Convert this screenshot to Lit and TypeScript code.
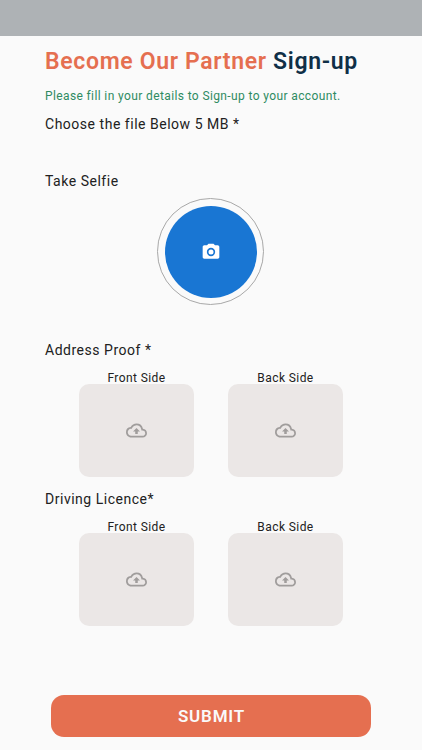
import { LitElement, html, css } from "lit";
import { customElement } from "lit/decorators.js";

const cloud = html`<svg class="cloud" viewBox="0 0 24 24" fill="#a09d9c"><path d="M19.35 10.04A7.49 7.49 0 0 0 12 4C9.11 4 6.6 5.64 5.35 8.04A5.994 5.994 0 0 0 0 14c0 3.31 2.69 6 6 6h13c2.76 0 5-2.24 5-5 0-2.64-2.05-4.78-4.65-4.96zM19 18H6c-2.21 0-4-1.79-4-4 0-2.05 1.53-3.76 3.56-3.97l1.07-.11.5-.95A5.469 5.469 0 0 1 12 6c2.62 0 4.88 1.86 5.39 4.43l.3 1.5 1.53.11A2.98 2.98 0 0 1 22 15c0 1.65-1.35 3-3 3zM8 13h2.55v3h2.9v-3H16l-4-4z"/></svg>`;

@customElement("app-root")
export class AppRoot extends LitElement {
  static styles = css`
    :host { display: block; position: relative; width: 422px; height: 750px; background: #fafafa; font-family: Roboto, "Liberation Sans", sans-serif; color: #212121; overflow: hidden; }
    .status { height: 36px; background: #aeb2b5; }
    .content { padding: 11px 45px 0; display: flex; flex-direction: column; }
    h1 { margin: 0; font-size: 23px; line-height: 30px; font-weight: 600; letter-spacing: 0.66px; color: #e56f50; white-space: nowrap; }
    h1 span { color: #0f2f47; }
    .sub { margin: 12px 0 0; font-size: 12px; line-height: 15px; letter-spacing: 0.38px; color: #2e8b62; white-space: nowrap; }
    .label { font-size: 14px; line-height: 18px; letter-spacing: 0.52px; color: #212121; white-space: nowrap; }
    .choose { margin-top: 11px; }
    .selfie { margin-top: 39px; }
    .ring { box-sizing: border-box; width: 107px; height: 107px; margin: 8px 0 0 112px; border: 1px solid #a8a8a8; border-radius: 50%; display: flex; align-items: center; justify-content: center; }
    .disc { flex: none; width: 92px; height: 92px; border-radius: 50%; background: #1976d3; display: flex; align-items: center; justify-content: center; }
    .cam { width: 20px; height: 20px; display: block; }
    .address { margin-top: 36px; }
    .licence { margin-top: 13px; }
    .row { display: flex; gap: 34px; margin: 13px 0 0 34px; }
    .slot { width: 115px; display: flex; flex-direction: column; align-items: center; }
    .side { font-size: 12px; line-height: 12px; letter-spacing: 0.42px; color: #212121; white-space: nowrap; }
    .tile { width: 115px; height: 93px; background: #ebe7e6; border-radius: 10px; display: flex; align-items: center; justify-content: center; }
    .cloud { width: 21px; height: 21px; display: block; }
    .submit { display: block; position: absolute; left: 51px; top: 695px; width: 320px; height: 42px; border: 0; border-radius: 13px; background: #e56f50; color: #fafafa; font: 600 17px/42px Roboto, "Liberation Sans", sans-serif; letter-spacing: 0.8px; text-align: center; padding: 0 0 0 1px; }
  `;

  private pair() {
    return html`<div class="row">
      <div class="slot"><div class="side">Front Side</div><div class="tile">${cloud}</div></div>
      <div class="slot"><div class="side">Back Side</div><div class="tile">${cloud}</div></div>
    </div>`;
  }

  render() {
    return html`
      <div class="status"></div>
      <div class="content">
        <h1>Become Our Partner <span>Sign-up</span></h1>
        <p class="sub">Please fill in your details to Sign-up to your account.</p>
        <div class="label choose">Choose the file Below 5 MB *</div>
        <div class="label selfie">Take Selfie</div>
        <div class="ring"><div class="disc">
          <svg class="cam" viewBox="0 0 24 24" fill="#fff"><path fill-rule="evenodd" d="M9 2 7.17 4H4C2.9 4 2 4.9 2 6v12c0 1.1.9 2 2 2h16c1.1 0 2-.9 2-2V6c0-1.1-.9-2-2-2h-3.17L15 2H9zm3 15a5 5 0 1 1 0-10 5 5 0 0 1 0 10zm0-2a3 3 0 1 0 0-6 3 3 0 0 0 0 6z"/></svg>
        </div></div>
        <div class="label address">Address Proof *</div>
        ${this.pair()}
        <div class="label licence">Driving Licence*</div>
        ${this.pair()}
      </div>
      <button class="submit">SUBMIT</button>
    `;
  }
}
